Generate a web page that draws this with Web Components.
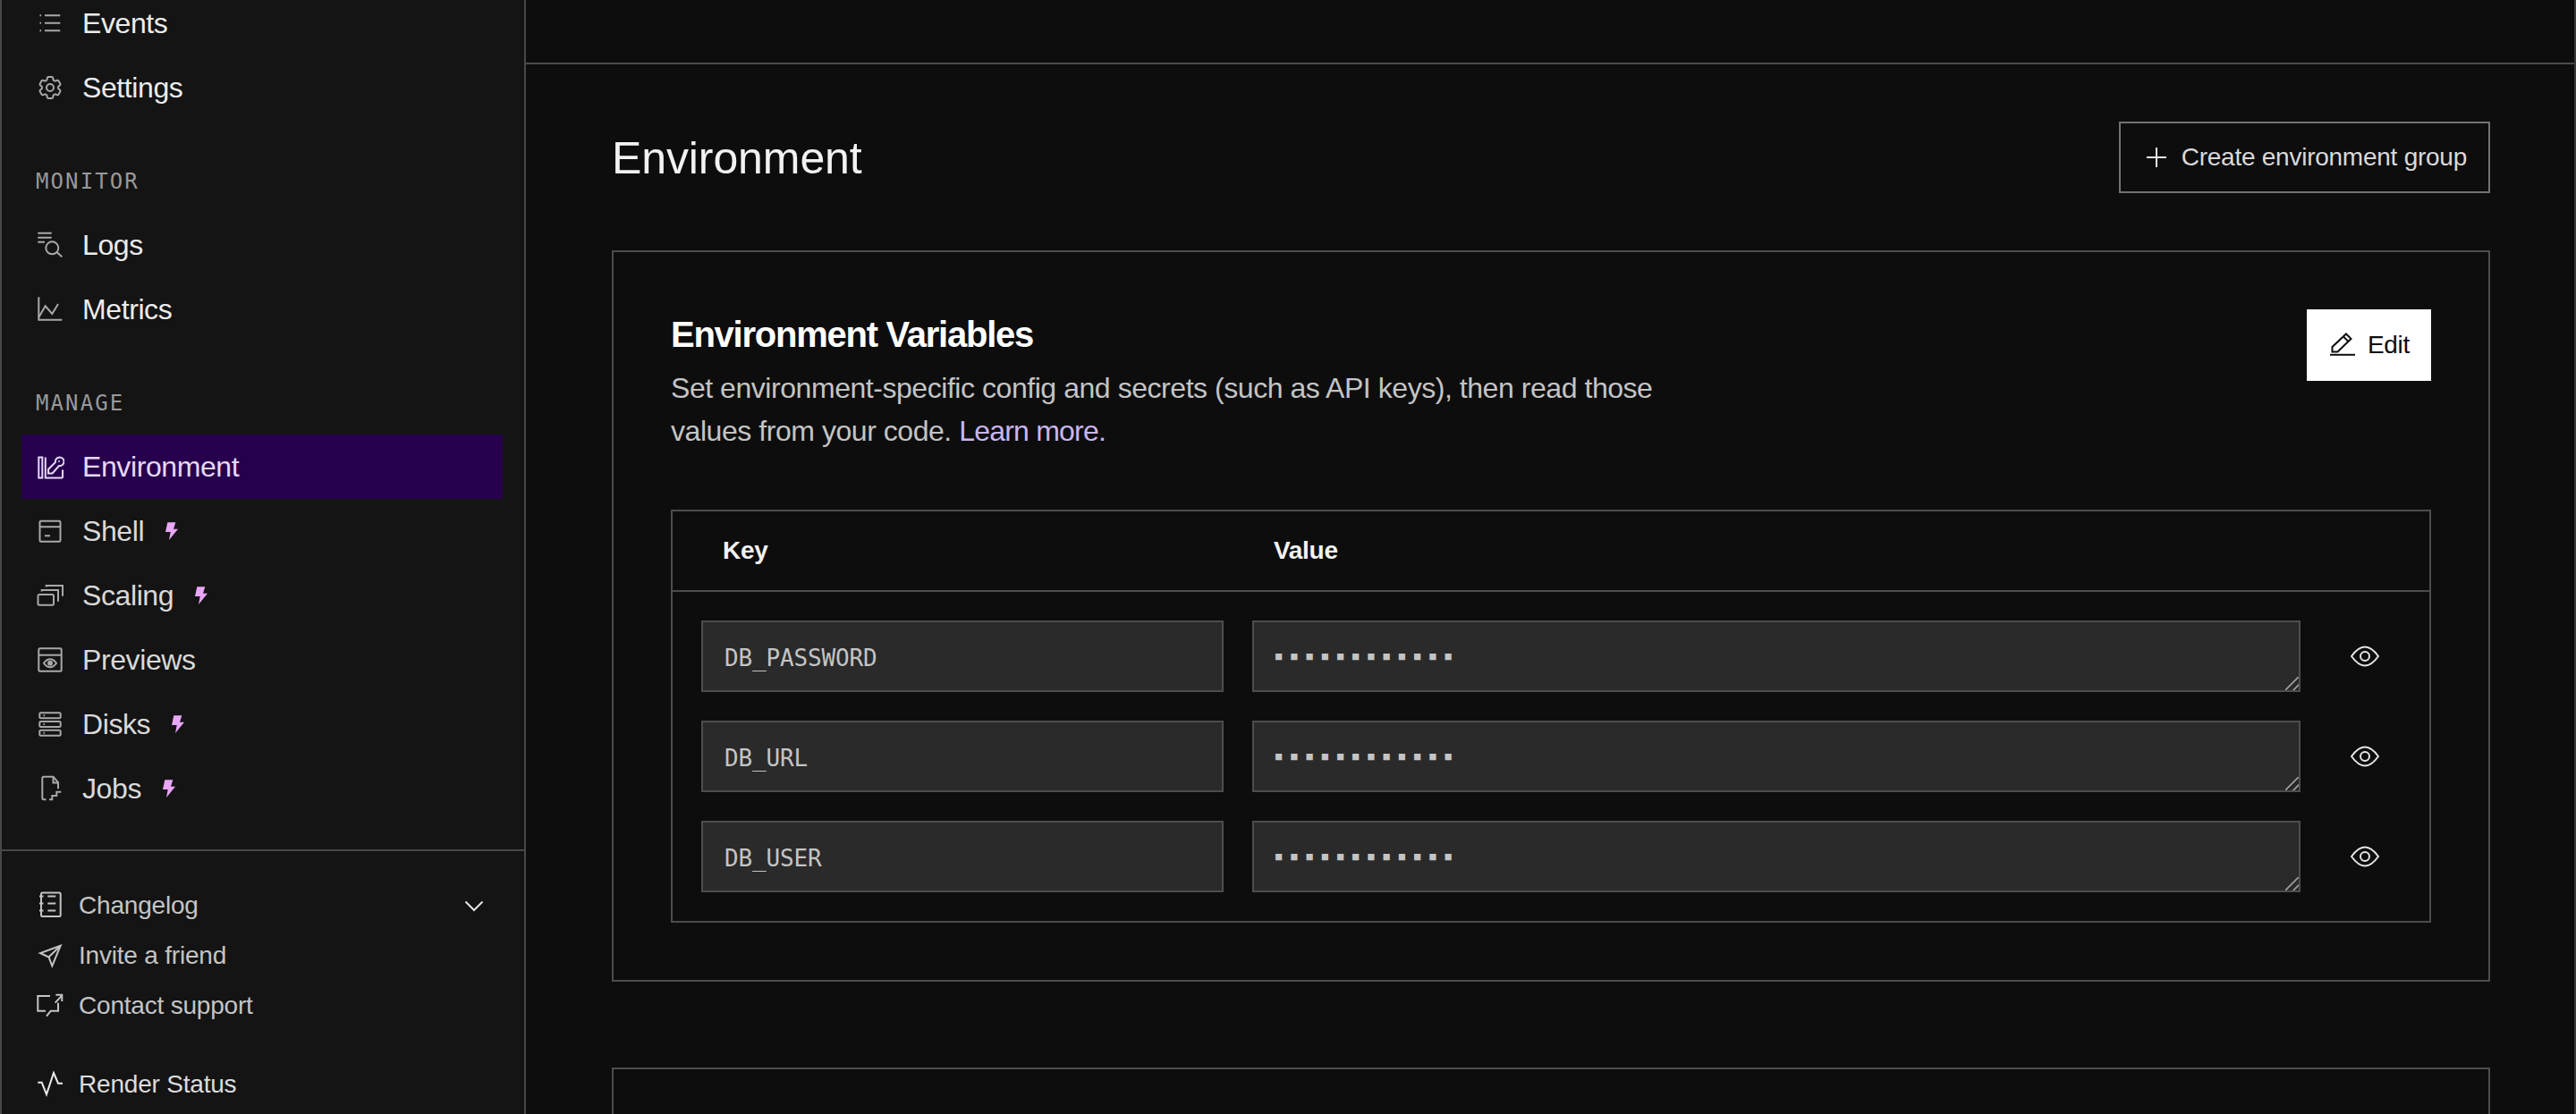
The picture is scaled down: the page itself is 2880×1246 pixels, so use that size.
<!DOCTYPE html>
<html>
<head>
  <meta charset="UTF-8" />
  <title>Environment</title>
  <style>
    html, body { margin: 0; padding: 0; background: #0d0d0d; }
    body { font-family: "Liberation Sans", Arial, sans-serif; color: #e6e6e6; overflow: hidden; }
  </style>
</head>
<body>
  <app-shell>
    <side-bar slot="side">
      <nav-item icon="events" bright>Events</nav-item>
      <nav-item icon="settings" bright>Settings</nav-item>
      <nav-label>MONITOR</nav-label>
      <nav-item icon="logs" bright>Logs</nav-item>
      <nav-item icon="metrics" bright>Metrics</nav-item>
      <nav-label>MANAGE</nav-label>
      <nav-item icon="environment" active>Environment</nav-item>
      <nav-item icon="shell" bolt>Shell</nav-item>
      <nav-item icon="scaling" bolt>Scaling</nav-item>
      <nav-item icon="previews">Previews</nav-item>
      <nav-item icon="disks" bolt>Disks</nav-item>
      <nav-item icon="jobs" bolt>Jobs</nav-item>

      <foot-link slot="foot" icon="changelog" chevron>Changelog</foot-link>
      <foot-link slot="foot" icon="invite">Invite a friend</foot-link>
      <foot-link slot="foot" icon="contact">Contact support</foot-link>
      <foot-link slot="foot" icon="status" spaced bright>Render Status</foot-link>
    </side-bar>

    <page-head>
      Environment
      <ui-button slot="action" icon="plus">Create environment group</ui-button>
    </page-head>

    <env-card>
      <span slot="title">Environment Variables</span>
      <text-line slot="text">Set environment-specific config and secrets (such as API keys), then read those</text-line>
      <text-line slot="text">values from your code. <a-link>Learn more.</a-link></text-line>
      <ui-button slot="action" icon="pencil" primary>Edit</ui-button>
      <env-table>
        <env-row key="DB_PASSWORD"></env-row>
        <env-row key="DB_URL"></env-row>
        <env-row key="DB_USER"></env-row>
      </env-table>
    </env-card>

    <env-card empty></env-card>
  </app-shell>

  <script>
    // icons are drawn in a 32x32 box, stroke comes from currentColor
    const ICONS = {
      events: '<path d="M10 7.3h17.3M10 15.7h17.3M10 24.3h17.3"/><path d="M4.5 7.3h1.6M4.5 15.7h1.6M4.5 24.3h1.6"/>',
      settings: '<svg x="0" y="0" width="32" height="32" viewBox="0 0 24 24" stroke-width="1.5"><path d="M9.594 3.94c.09-.542.56-.94 1.11-.94h2.593c.55 0 1.02.398 1.11.94l.213 1.281c.063.374.313.686.645.87.074.04.147.083.22.127.325.196.72.257 1.075.124l1.217-.456a1.125 1.125 0 0 1 1.37.49l1.296 2.247a1.125 1.125 0 0 1-.26 1.431l-1.003.827c-.293.241-.438.613-.43.992a7.723 7.723 0 0 1 0 .255c-.008.378.137.75.43.991l1.004.827c.424.35.534.955.26 1.43l-1.298 2.247a1.125 1.125 0 0 1-1.369.491l-1.217-.456c-.355-.133-.75-.072-1.076.124a6.47 6.47 0 0 1-.22.128c-.331.183-.581.495-.644.869l-.213 1.281c-.09.543-.56.94-1.11.94h-2.594c-.55 0-1.019-.398-1.11-.94l-.213-1.281c-.062-.374-.312-.686-.644-.87a6.52 6.52 0 0 1-.22-.127c-.325-.196-.72-.257-1.076-.124l-1.217.456a1.125 1.125 0 0 1-1.369-.49l-1.297-2.247a1.125 1.125 0 0 1 .26-1.431l1.004-.827c.292-.24.437-.613.43-.991a6.932 6.932 0 0 1 0-.255c.007-.38-.138-.751-.43-.992l-1.004-.827a1.125 1.125 0 0 1-.26-1.43l1.297-2.247a1.125 1.125 0 0 1 1.37-.491l1.216.456c.356.133.751.072 1.076-.124.072-.044.146-.086.22-.128.332-.183.582-.495.644-.869l.214-1.28Z"/><circle cx="12" cy="12" r="3"/></svg>',
      logs: '<path d="M2.3 2.7h15.4M2.3 7.7h15.4M2.3 12.7H10"/><circle cx="18.3" cy="19.3" r="7"/><path d="M23.5 24l5.8 5.3"/>',
      metrics: '<path d="M3.3 2.3v25.4h26"/><path d="M3.3 25l7.4-12.7 7.6 8.7L25 10"/>',
      environment: '<rect x="3.300" y="5.500" width="4" height="23"/><path d="M10.800 5.500v23H29a1 1 0 0 0 1-1v-8"/><path d="M14 23.500V19l8-8a4.800 4.800 0 1 1 4 4L18.500 23.500z"/><circle cx="26" cy="10" r="1" fill="currentColor" stroke="none"/>',
      shell: '<rect x="4.500" y="4.700" width="23" height="23" rx="1.500"/><path d="M4.500 11.300h23M10 21.300h6"/>',
      scaling: '<rect x="2.500" y="15" width="17.500" height="11.700" rx="1.500"/><path d="M6.700 11.500V10H25v12.700"/><path d="M11.700 6.500V5H30v11.700"/>',
      previews: '<rect x="3.300" y="3.300" width="25.400" height="25.400" rx="1.500"/><path d="M3.300 10.700h25.400"/><path d="M9 19.700c2-3 4.500-4.500 7-4.500s5 1.500 7 4.500c-2 3-4.500 4.500-7 4.500s-5-1.500-7-4.500z"/><circle cx="16" cy="19.700" r="2" fill="currentColor"/>',
      disks: '<rect x="4.300" y="3.300" width="23.400" height="6" rx="1.500"/><rect x="4.300" y="13" width="23.400" height="6" rx="1.500"/><rect x="4.300" y="22.700" width="23.400" height="6" rx="1.500"/><path d="M8.500 6.300h1.500M8.500 16h1.500M8.500 25.700h1.500"/>',
      jobs: '<path d="M11.500 28.300H9a1.700 1.700 0 0 1-1.700-1.700V4.400A1.700 1.700 0 0 1 9 2.700h10.500l5.500 6.500v7"/><path d="M19.500 3v6.500H25"/><path d="M28.300 19.700h-5v4.400h-5v4.200H15"/>',
      changelog: '<rect x="6" y="1.500" width="21.700" height="26.500" rx="1.500"/><path d="M13.300 5.500h9M13.300 13.500h9M13.300 21.500h9"/><path d="M4 5.500h4.500M4 13.500h4.500M4 21.500h4.500"/>',
      invite: '<path d="M27.700 4.700L5 13l9.500 4.500 3.800 9.800z"/><path d="M27.700 4.700L14.500 17.500"/>',
      contact: '<path d="M16 5H2.300v16.700h8.700"/><path d="M12 27.700l4.700-6H25v-9"/><path d="M21.700 12.700l7.600-8.400"/><path d="M22.300 3.700h7V11"/>',
      status: '<path d="M2.300 13.700h4.400L12 27 20 3l5 11.700h5"/>',
      plus: '<path d="M16 5v22M5 16h22"/>',
      pencil: '<path d="M4.500 23.500v-5.500L20 3.500l5.500 5.500-15 14.500z"/><path d="M17 6.500l5.500 5.500"/><path d="M2 26.800h28"/>',
      chevron: '<path d="M6.500 11.500L16 21l9.500-9.500"/>',
      eye: '<path d="M1 16C6 9 11 5.500 16 5.500S26 9 31 16c-5 7-10 10.500-15 10.500S6 23 1 16z"/><circle cx="16" cy="16" r="5"/>'
    };

    function iconSvg(name) {
      return '<svg class="ic" viewBox="0 0 32 32" width="32" height="32" fill="none" stroke="currentColor" stroke-width="2">' + ICONS[name] + '</svg>';
    }

    class AppShell extends HTMLElement {
      constructor() {
        super();
        this.attachShadow({ mode: 'open' }).innerHTML = `
          <style>
            :host { display: grid; grid-template-columns: 588px 1fr; height: 1246px; overflow: hidden; background: #0d0d0d; }
            main { height: 1246px; overflow: hidden; border-right: 2px solid #3a3a3a; box-sizing: border-box; }
            .strip { height: 70px; border-bottom: 2px solid #4d4d4d; }
            .body { padding: 64px 94px 0 96px; display: flex; flex-direction: column; gap: 96px; }
          </style>
          <slot name="side"></slot>
          <main>
            <div class="strip"></div>
            <div class="body"><slot></slot></div>
          </main>`;
      }
    }

    class SideBar extends HTMLElement {
      constructor() {
        super();
        this.attachShadow({ mode: 'open' }).innerHTML = `
          <style>
            :host { display: flex; flex-direction: column; height: 1246px; box-sizing: border-box; background: #141414;
                    border-left: 2px solid #484848; border-right: 2px solid #484848; overflow: hidden; }
            nav { flex: 1; min-height: 0; display: flex; flex-direction: column; padding: 0 24px 0 22px; margin-top: -10px; }
            footer { flex: none; height: 296px; box-sizing: border-box; border-top: 2px solid #484848; padding-top: 33px; display: flex; flex-direction: column; }
          </style>
          <nav><slot></slot></nav>
          <footer><slot name="foot"></slot></footer>`;
      }
    }

    class NavLabel extends HTMLElement {
      constructor() {
        super();
        this.attachShadow({ mode: 'open' }).innerHTML = `
          <style>
            :host { display: block; height: 40px; margin: 48px 0 16px; padding-left: 16px;
                    font: 24px/42px "DejaVu Sans Mono", monospace; letter-spacing: 2.1px; color: #999; }
          </style>
          <slot></slot>`;
      }
    }

    class NavItem extends HTMLElement {
      connectedCallback() {
        if (this.shadowRoot) return;
        const bolt = this.hasAttribute('bolt')
          ? '<svg class="bolt" viewBox="0 0 14 20" width="14" height="20"><path fill="#e8a6f6" d="M2.300.3h9L9 7.700h5L4 20l1.700-9H0z"/></svg>' : '';
        this.attachShadow({ mode: 'open' }).innerHTML = `
          <style>
            :host { display: flex; align-items: center; height: 72px; flex: none; padding-left: 16px;
                    font-size: 32px; letter-spacing: -0.4px; color: #d9d9d9; }
            :host([bright]) { color: #ececec; }
            :host([active]) { background: #27004d; color: #e6d8fb; }
            .ic { flex: none; margin-right: 20px; color: #a8a8a8; }
            :host([active]) .ic { color: #e6d8fb; }
            .bolt { flex: none; margin-left: 24px; }
          </style>
          ${iconSvg(this.getAttribute('icon'))}<span><slot></slot></span>${bolt}`;
      }
    }

    class FootLink extends HTMLElement {
      connectedCallback() {
        if (this.shadowRoot) return;
        const chev = this.hasAttribute('chevron') ? '<span class="chev">' + iconSvg('chevron') + '</span>' : '';
        this.attachShadow({ mode: 'open' }).innerHTML = `
          <style>
            :host { display: flex; align-items: center; height: 56px; flex: none; padding: 0 40px 0 38px;
                    font-size: 28px; letter-spacing: -0.2px; color: #c4c4c4; }
            :host([spaced]) { margin-top: 32px; }
            :host([bright]) { color: #dcdcdc; }
            .ic { flex: none; margin-right: 16px; color: #c4c4c4; }
            :host([bright]) .ic { color: #ececec; }
            .chev { margin-left: auto; display: flex; }
            .chev .ic { margin: 0; color: #e6e6e6; }
          </style>
          ${iconSvg(this.getAttribute('icon'))}<span><slot></slot></span>${chev}`;
      }
    }

    class PageHead extends HTMLElement {
      constructor() {
        super();
        this.attachShadow({ mode: 'open' }).innerHTML = `
          <style>
            :host { display: flex; align-items: center; justify-content: space-between; height: 80px; margin-bottom: -32px; }
            h1 { margin: 0; padding-top: 2px; font-size: 50px; font-weight: 400; letter-spacing: -0.1px; color: #f2f2f2; }
          </style>
          <h1><slot></slot></h1><slot name="action"></slot>`;
      }
    }

    class UiButton extends HTMLElement {
      connectedCallback() {
        if (this.shadowRoot) return;
        this.attachShadow({ mode: 'open' }).innerHTML = `
          <style>
            :host { display: inline-flex; align-items: center; height: 80px; box-sizing: border-box; padding: 0 24px 0 24px;
                    border: 2px solid #737373; font-size: 28px; letter-spacing: -0.25px; color: #d9d9d9; gap: 12px; white-space: nowrap; }
            :host([primary]) { background: #fff; border-color: #fff; color: #0d0d0d; padding: 0 22px; letter-spacing: -0.3px; }
            .ic { flex: none; color: #e6e6e6; }
            :host([primary]) .ic { color: #0d0d0d; }
          </style>
          ${iconSvg(this.getAttribute('icon'))}<span><slot></slot></span>`;
      }
    }

    class TextLine extends HTMLElement {
      constructor() {
        super();
        this.attachShadow({ mode: 'open' }).innerHTML = `
          <style>:host { display: block; white-space: nowrap; }</style><slot></slot>`;
      }
    }

    class ALink extends HTMLElement {
      constructor() {
        super();
        this.attachShadow({ mode: 'open' }).innerHTML = `
          <style>:host { display: inline; color: #c9b6f2; letter-spacing: -0.8px; }</style><slot></slot>`;
      }
    }

    class EnvCard extends HTMLElement {
      constructor() {
        super();
        this.attachShadow({ mode: 'open' }).innerHTML = `
          <style>
            :host { display: block; box-sizing: border-box; border: 2px solid #4d4d4d; padding: 64px; flex: none; }
            :host([empty]) { height: 320px; }
            :host([empty]) .top { display: none; }
            .top { display: flex; justify-content: space-between; align-items: flex-start; margin-bottom: 64px; }
            h2 { margin: 0 0 8px; font-size: 40px; line-height: 56px; font-weight: 700; letter-spacing: -1.25px; color: #fff; }
            p { margin: 0; font-size: 32px; line-height: 48px; letter-spacing: -0.45px; color: #c4c4c4; }
          </style>
          <div class="top">
            <div><h2><slot name="title"></slot></h2><p><slot name="text"></slot></p></div>
            <slot name="action"></slot>
          </div>
          <slot></slot>`;
      }
    }

    class EnvTable extends HTMLElement {
      constructor() {
        super();
        this.attachShadow({ mode: 'open' }).innerHTML = `
          <style>
            :host { display: block; border: 2px solid #4d4d4d; }
            .head { display: grid; grid-template-columns: 584px 1172px; gap: 32px; height: 88px; align-items: center;
                    padding-left: 32px; border-bottom: 2px solid #4d4d4d; font-size: 28px; font-weight: 700; letter-spacing: -0.3px; color: #f2f2f2; }
            .head span { padding-left: 24px; }
            .rows { display: flex; flex-direction: column; gap: 32px; padding: 32px 0 32px 32px; }
          </style>
          <div class="head"><span>Key</span><span>Value</span></div>
          <div class="rows"><slot></slot></div>`;
      }
    }

    class EnvRow extends HTMLElement {
      connectedCallback() {
        if (this.shadowRoot) return;
        this.attachShadow({ mode: 'open' }).innerHTML = `
          <style>
            :host { display: grid; grid-template-columns: 584px 1172px 112px; column-gap: 32px; height: 80px; }
            .key, textarea { box-sizing: border-box; height: 80px; background: #2a2a2a; border: 2px solid #4d4d4d; color: #c4c4c4;
                             font: 26px/80px "DejaVu Sans Mono", monospace; letter-spacing: -0.15px; padding: 0 24px; margin: 0; }
            textarea { display: block; width: 1172px; resize: vertical; outline: none; overflow: hidden; color-scheme: dark;
                       font-size: 12px; line-height: 76px; letter-spacing: 10px; -webkit-text-security: square; }
            textarea::-webkit-resizer {
              background: linear-gradient(135deg, transparent 44%, #8c8c8c 44% 54%, #1c1c1c 54% 60%, transparent 60% 76%, #8c8c8c 76% 85%, #1c1c1c 85% 90%, transparent 90%);
            }
            .eye { margin-left: -32px; display: flex; align-items: center; justify-content: center; color: #e6e6e6; }
          </style>
          <div class="key">${this.getAttribute('key')}</div>
          <textarea readonly rows="1">••••••••••••</textarea>
          <div class="eye">${iconSvg('eye')}</div>`;
      }
    }

    customElements.define('app-shell', AppShell);
    customElements.define('side-bar', SideBar);
    customElements.define('nav-label', NavLabel);
    customElements.define('nav-item', NavItem);
    customElements.define('foot-link', FootLink);
    customElements.define('page-head', PageHead);
    customElements.define('ui-button', UiButton);
    customElements.define('text-line', TextLine);
    customElements.define('a-link', ALink);
    customElements.define('env-card', EnvCard);
    customElements.define('env-table', EnvTable);
    customElements.define('env-row', EnvRow);
  </script>
</body>
</html>
